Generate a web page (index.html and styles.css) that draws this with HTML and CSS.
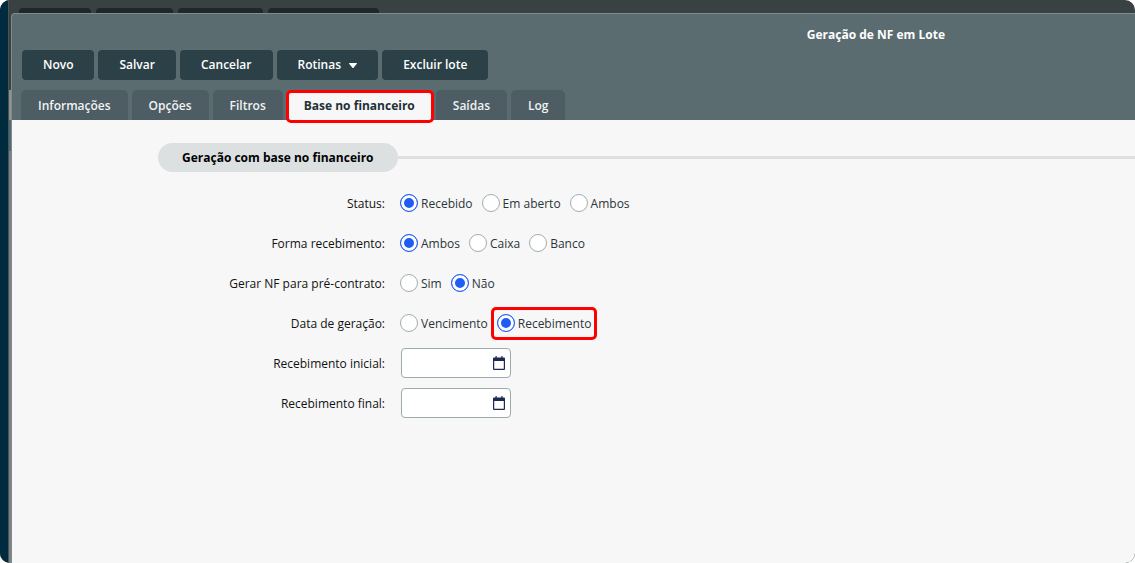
FILE: index.html
```html
<!DOCTYPE html>
<html lang="pt-BR">
<head>
<meta charset="utf-8">
<title>Geração de NF em Lote</title>
<link rel="stylesheet" href="styles.css">
</head>
<body>
<div class="app">
  <div class="rail"></div>
  <div class="edge"></div>
  <div class="workspace">
    <div class="backdrop"><span class="ghost g1"></span><span class="ghost g2"></span><span class="ghost g3"></span><span class="ghost g4"></span></div>
    <main class="dialog">
      <header class="head">
        <h1 class="title">Geração de NF em Lote</h1>
        <div class="toolbar">
          <button class="btn" type="button">Novo</button>
          <button class="btn" type="button">Salvar</button>
          <button class="btn" type="button">Cancelar</button>
          <button class="btn" type="button">Rotinas <svg class="caret" viewBox="0 0 8 5" aria-hidden="true"><path d="M.4 0h7.2q.6.2.2.8L4.6 4.7q-.6.5-1.2 0L.2.8Q-.2.2.4 0z" fill="currentColor"/></svg></button>
          <button class="btn" type="button">Excluir lote</button>
        </div>
        <nav class="tabs">
          <button class="tab" type="button">Informações</button>
          <button class="tab" type="button">Opções</button>
          <button class="tab" type="button">Filtros</button>
          <button class="tab active" type="button">Base no financeiro</button>
          <button class="tab" type="button">Saídas</button>
          <button class="tab" type="button">Log</button>
        </nav>
      </header>
      <form class="form">
        <h2 class="section"><span class="pill">Geração com base no financeiro</span></h2>
        <div class="row" role="radiogroup" aria-labelledby="l1">
          <span class="name" id="l1">Status:</span>
          <div class="options">
            <label class="option"><input type="radio" name="status" checked><span class="text">Recebido</span></label>
            <label class="option"><input type="radio" name="status"><span class="text">Em aberto</span></label>
            <label class="option"><input type="radio" name="status"><span class="text">Ambos</span></label>
          </div>
        </div>
        <div class="row" role="radiogroup" aria-labelledby="l2">
          <span class="name" id="l2">Forma recebimento:</span>
          <div class="options">
            <label class="option"><input type="radio" name="forma" checked><span class="text">Ambos</span></label>
            <label class="option"><input type="radio" name="forma"><span class="text">Caixa</span></label>
            <label class="option"><input type="radio" name="forma"><span class="text">Banco</span></label>
          </div>
        </div>
        <div class="row" role="radiogroup" aria-labelledby="l3">
          <span class="name" id="l3">Gerar NF para pré-contrato:</span>
          <div class="options">
            <label class="option"><input type="radio" name="pre"><span class="text">Sim</span></label>
            <label class="option"><input type="radio" name="pre" checked><span class="text">Não</span></label>
          </div>
        </div>
        <div class="row" role="radiogroup" aria-labelledby="l4">
          <span class="name" id="l4">Data de geração:</span>
          <div class="options">
            <label class="option"><input type="radio" name="data"><span class="text">Vencimento</span></label>
            <label class="option marked"><input type="radio" name="data" checked><span class="text">Recebimento</span></label>
          </div>
        </div>
        <div class="row">
          <label class="name" for="inicial">Recebimento inicial:</label>
          <div class="date">
            <input class="field" id="inicial" type="text">
            <svg class="cal" viewBox="0 0 12 14" aria-hidden="true"><path fill="#1c2951" fill-rule="evenodd" d="M2.500 0h1.200v1.500h4.600V0h1.200v1.500H11q1 0 1 1V13q0 1-1 1H1q-1 0-1-1V2.500q0-1 1-1h1.500zM1.200 5v7.800h9.600V5z"/></svg>
          </div>
        </div>
        <div class="row">
          <label class="name" for="final">Recebimento final:</label>
          <div class="date">
            <input class="field" id="final" type="text">
            <svg class="cal" viewBox="0 0 12 14" aria-hidden="true"><path fill="#1c2951" fill-rule="evenodd" d="M2.500 0h1.200v1.500h4.600V0h1.200v1.500H11q1 0 1 1V13q0 1-1 1H1q-1 0-1-1V2.500q0-1 1-1h1.500zM1.200 5v7.800h9.600V5z"/></svg>
          </div>
        </div>
      </form>
    </main>
  </div>
</div>
</body>
</html>
```
FILE: styles.css
```css
* { box-sizing: border-box; }
body {
  margin: 0;
  background: #fff;
  color: #111;
  font: 12px/16px "Open Sans", "Noto Sans", sans-serif;
}
button, input { font: inherit; }
.app {
  display: flex;
  min-height: 100vh;
  border-radius: 10px;
  overflow: hidden;
  background: #394143;
}
.rail { width: 8px; background: #002b3f; }
.edge {
  width: 3px;
  border-left: 1px solid #50504d;
  background: linear-gradient(#394143 90px, #8f9291 90px, #8f9291 120px, #4c6a77 120px, #4c6a77 151px, #77828a 151px);
}
.workspace { flex: 1; min-width: 0; display: flex; flex-direction: column; }
.backdrop {
  display: flex;
  align-items: flex-end;
  gap: 5px;
  height: 13px;
  padding-left: 8px;
}
.ghost { height: 5px; border-radius: 4px 4px 0 0; background: #1e2829; }
.g1 { width: 72px; }
.g2 { width: 77px; }
.g3 { width: 85px; }
.g4 { width: 111px; }
.dialog {
  flex: 1;
  display: flex;
  flex-direction: column;
  border-top: 1px solid #7e8c8f;
  border-left: 1px solid #7e8c8f;
  border-radius: 4px 0 0 0;
  background: #5b6c70;
}
.head { padding-left: 10px; }
.title {
  margin: 0;
  padding: 13px 0 7px calc(52% + 16px);
  text-align: center;
  color: #fff;
  font-size: 12px;
  font-weight: 700;
}
.toolbar { display: flex; gap: 4px; }
.btn {
  height: 30px;
  padding: 0 21px;
  border: 0;
  border-radius: 4px;
  background: #2b4147;
  color: #fff;
  font-weight: 600;
}
.caret { width: 8px; height: 5px; margin-left: 5px; vertical-align: 1px; }
.tabs { display: flex; gap: 4px; margin: 10px 0 0 -1px; }
.tab {
  height: 30px;
  padding: 2px 17px 0;
  border: 0;
  border-radius: 5px 5px 0 0;
  background: #4d5d63;
  color: #f0f3f4;
  font-weight: 600;
}
.tab.active {
  height: 33px;
  margin: 0 -2px -3px -1px;
  padding: 0 16px 1px 15px;
  border: 3px solid #f00;
  border-radius: 5px;
  background: #f7f7f7;
  color: #1e3138;
  font-weight: 700;
  z-index: 1;
}
.form { flex: 1; padding-top: 23px; background: #f7f7f7; }
.section {
  display: flex;
  align-items: center;
  margin: 0 0 11px;
  padding-left: 146px;
  font-size: 12px;
  font-weight: 700;
  color: #000;
}
.section::after { content: ""; flex: 1; height: 3px; background: #dce0e0; }
.pill { padding: 7px 24px 6px; border-radius: 15px; background: #dce0e0; }
.row { display: flex; align-items: center; height: 40px; }
.name { width: 373px; margin-right: 15px; padding-top: 2px; text-align: right; }
.options { display: flex; align-items: center; gap: 9px; }
.option { display: flex; align-items: center; gap: 3px; color: #2b3539; }
.text { padding-top: 2px; }
.option input {
  appearance: none;
  width: 18px;
  height: 18px;
  margin: 0;
  border: 1px solid #a0adb0;
  border-radius: 50%;
  background: #fff;
}
.option input:checked {
  border-color: #205df5;
  background: #205df5;
  box-shadow: inset 0 0 0 3px #fff;
}
.marked {
  margin: 0 -6px;
  padding: 4px 3px;
  height: 33px;
  border: 3px solid #f00;
  border-radius: 5px;
}
.date { position: relative; width: 110px; margin-left: 1px; }
.field {
  display: block;
  width: 100%;
  height: 30px;
  padding: 0 30px 0 8px;
  border: 1px solid #9dabae;
  border-radius: 4px;
  background: #fff;
}
.cal { position: absolute; top: 8px; right: 6px; width: 12px; height: 14px; pointer-events: none; }
```
